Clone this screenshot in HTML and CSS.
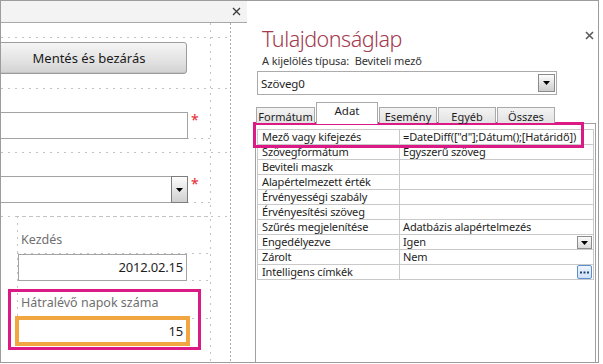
FILE: index.html
```html
<!DOCTYPE html>
<html lang="hu">
<head>
<meta charset="utf-8">
<title>Tulajdonságlap</title>
<link rel="stylesheet" href="styles.css">
</head>
<body>
<div class="frame">
  <section class="form-pane">
    <div class="doc-bar">
      <svg class="doc-close" width="9" height="9" viewBox="0 0 9 9"><path d="M1 1L8 8M8 1L1 8" stroke="#3a3a3a" stroke-width="1.3" fill="none"/></svg>
    </div>
    <div class="canvas">
      <div class="guide g-h g-top"></div>
      <div class="guide g-h g-mid"></div>
      <div class="guide g-h g-after1"></div>
      <div class="guide g-h g-after2"></div>
      <div class="guide g-h g-short g-s1"></div>
      <div class="guide g-h g-short g-s2"></div>
      <div class="guide g-v g-v210"></div>
      <div class="guide g-v g-v230"></div>

      <button class="btn">Mentés és bezárás</button>

      <div class="field-row row-text">
        <div class="textbox wide"></div>
        <span class="req">*</span>
      </div>

      <div class="field-row row-combo">
        <div class="textbox wide combo">
          <span class="dd-btn"><svg width="7" height="4" viewBox="0 0 7 4"><path d="M0 0H7L3.5 4Z" fill="#000"/></svg></span>
        </div>
        <span class="req">*</span>
      </div>

      <div class="stack">
        <div class="cell lbl lbl-first">Kezdés</div>
        <div class="cell fld"><div class="textbox num">2012.02.15</div></div>
        <div class="cell lbl lbl-second">Hátralévő napok száma</div>
        <div class="cell fld fld-sel"><div class="textbox num selected">15</div></div>
      </div>

      <div class="highlight hl-left"></div>
    </div>
  </section>

  <section class="props">
    <div class="props-head">
      <h1 class="title">Tulajdonságlap</h1>
      <svg class="props-close" width="9" height="9" viewBox="0 0 9 9"><path d="M1 1L8 8M8 1L1 8" stroke="#5a5a5a" stroke-width="1.6" fill="none"/></svg>
    </div>
    <div class="sel-type">A kijelölés típusa:&nbsp; Beviteli mező</div>
    <div class="obj-combo">
      <span class="obj-name">Szöveg0</span>
      <span class="dd-btn small"><svg width="7" height="4" viewBox="0 0 7 4"><path d="M0 0H7L3.5 4Z" fill="#000"/></svg></span>
    </div>
    <div class="tabs">
      <div class="tab t1">Formátum</div>
      <div class="tab t2 active">Adat</div>
      <div class="tab t3">Esemény</div>
      <div class="tab t4">Egyéb</div>
      <div class="tab t5">Összes</div>
    </div>
    <div class="tab-panel">
      <div class="prop-table">
        <div class="pk">Mező vagy kifejezés</div><div class="pv">=DateDiff(["d"];Dátum();[Határidő])</div>
        <div class="pk">Szövegformátum</div><div class="pv">Egyszerű szöveg</div>
        <div class="pk">Beviteli maszk</div><div class="pv"></div>
        <div class="pk">Alapértelmezett érték</div><div class="pv"></div>
        <div class="pk">Érvényességi szabály</div><div class="pv"></div>
        <div class="pk">Érvényesítési szöveg</div><div class="pv"></div>
        <div class="pk">Szűrés megjelenítése</div><div class="pv">Adatbázis alapértelmezés</div>
        <div class="pk">Engedélyezve</div><div class="pv">Igen<span class="mini-dd"><svg width="7" height="4" viewBox="0 0 7 4"><path d="M0 0H7L3.5 4Z" fill="#000"/></svg></span></div>
        <div class="pk">Zárolt</div><div class="pv">Nem</div>
        <div class="pk">Intelligens címkék</div><div class="pv"><span class="build-btn"><svg width="9" height="3" viewBox="0 0 9 3"><rect x="0" y="0.5" width="2" height="2" fill="#1d3f77"/><rect x="3.5" y="0.5" width="2" height="2" fill="#1d3f77"/><rect x="7" y="0.5" width="2" height="2" fill="#1d3f77"/></svg></span></div>
      </div>
    </div>
    <div class="highlight hl-right"></div>
  </section>
</div>
</body>
</html>
```
FILE: styles.css
```css
* { box-sizing: border-box; }
html, body { margin: 0; padding: 0; }
body {
  width: 603px;
  height: 364px;
  background: #fff;
  overflow: hidden;
  font-family: "Noto Sans", "Open Sans", sans-serif;
  color: #222;
}

.frame {
  display: flex;
  width: 599px;
  height: 363px;
  border: 1px solid #9c9c9c;
}

/* ---------- left: form design pane ---------- */
.form-pane {
  width: 246px;
  display: flex;
  flex-direction: column;
}
.doc-bar {
  height: 22px;
  background: #f3f3f3;
  border-bottom: 1px solid #a8a8a8;
  display: flex;
  align-items: center;
  justify-content: flex-end;
  padding-right: 6px;
}
.doc-close { display: block; }

.canvas {
  position: relative;
  flex: 1;
  overflow: hidden;
}

.guide { position: absolute; }
.g-h {
  height: 1px;
  left: 0;
  width: 229px;
  background: repeating-linear-gradient(90deg, #c3c3c3 0 2px, transparent 2px 7px);
}
.g-top { top: 14px; }
.g-mid { top: 65px; }
.g-after1 { top: 129px; }
.g-after2 { top: 193px; }
.g-short { left: 186px; width: 23px; }
.g-s1 { top: 115px; }
.g-s2 { top: 179px; }
.g-v {
  width: 1px;
  top: 0;
  bottom: 0;
}
.g-v210 {
  left: 209px;
  background: repeating-linear-gradient(180deg, #c3c3c3 0 2px, transparent 2px 7px);
}
.g-v230 {
  left: 229px;
  background: repeating-linear-gradient(180deg, #a9a9a9 0 2px, transparent 2px 4px);
}

.btn {
  position: relative;
  display: block;
  margin: 19px 0 0 -10px;
  width: 196px;
  height: 32px;
  border: 1px solid #9b9b9b;
  border-radius: 3px;
  background: linear-gradient(#f5f5f5, #e4e4e4 55%, #d2d2d2);
  box-shadow: inset 0 -1px 0 #c4c4c4;
  font-family: "Noto Sans", "Open Sans", sans-serif;
  font-size: 13px;
  color: #1a1a1a;
  padding: 0 0 1px 0;
}

.field-row {
  position: relative;
  display: flex;
  align-items: flex-start;
  margin-left: -11px;
}
.row-text { margin-top: 38px; }
.row-combo { margin-top: 37px; }

.textbox {
  position: relative;
  height: 27px;
  border: 1px solid #a3a3a3;
  background: #fff;
}
.textbox.wide { width: 198px; }
.req {
  color: #e3262b;
  font-size: 14px;
  line-height: 1;
  margin: 1px 0 0 3px;
}
.combo .dd-btn {
  position: absolute;
  right: -1px;
  top: -1px;
  width: 17px;
  height: 27px;
  border: 1px solid #7d7d7d;
  background: linear-gradient(#fdfdfd, #e6e6e6 50%, #cfcfcf);
  display: flex;
  align-items: center;
  justify-content: center;
}
.dd-btn svg { display: block; }

.stack {
  position: relative;
  margin: 13px 0 0 16px;
  width: 193px;
  background:
    repeating-linear-gradient(90deg, #c3c3c3 0 2px, transparent 2px 7px) top left / 100% 1px no-repeat,
    repeating-linear-gradient(180deg, #c3c3c3 0 2px, transparent 2px 7px) top left / 1px 100% no-repeat;
}
.cell {
  background: repeating-linear-gradient(90deg, #c3c3c3 0 2px, transparent 2px 7px) bottom left / 100% 1px no-repeat;
}
.lbl {
  font-size: 12.5px;
  line-height: 16px;
  color: #6f6f6f;
  padding-left: 4px;
}
.lbl-first { height: 38px; padding-top: 16px; }
.lbl-second { height: 38px; padding-top: 14px; }
.fld { height: 27px; padding-left: 1px; }
.fld-sel { height: 30px; padding-top: 0; background: none; }
.textbox.num {
  width: 169px;
  font-size: 13px;
  line-height: 25px;
  text-align: right;
  padding-right: 3px;
  color: #1e1e1e;
  letter-spacing: -0.2px;
}
.textbox.selected {
  height: 24px;
  line-height: 22px;
  border-color: #f0a540;
  outline: 3px solid #f2a641;
}

.highlight {
  position: absolute;
  border: 3px solid #dc1a85;
  pointer-events: none;
}
.hl-left { left: 7px; top: 266px; width: 193px; height: 61px; }

/* ---------- right: property sheet ---------- */
.props {
  position: relative;
  width: 351px;
  display: flex;
  flex-direction: column;
}
.props-head {
  display: flex;
  align-items: flex-start;
  margin-top: 25px;
  padding-left: 15px;
  height: 27px;
}
.title {
  margin: 0;
  font-size: 21.5px;
  line-height: 25px;
  font-weight: 300;
  color: #a33a4e;
  letter-spacing: -0.5px;
}
.props-close {
  display: block;
  margin: 5px 4px 0 auto;
}
.sel-type {
  padding-left: 15px;
  font-size: 11px;
  line-height: 15px;
  color: #333;
  letter-spacing: -0.1px;
}
.obj-combo {
  position: relative;
  margin: 3px 0 0 10px;
  width: 300px;
  height: 24px;
  border: 1px solid #ababab;
  display: flex;
  align-items: center;
  justify-content: space-between;
  padding: 0 1px 0 3px;
}
.obj-name { font-size: 11.5px; color: #1e1e1e; letter-spacing: -0.1px; }
.dd-btn.small {
  width: 17px;
  height: 18px;
  border: 1px solid #8a8a8a;
  background: linear-gradient(#fdfdfd, #e4e4e4 50%, #cdcdcd);
  display: flex;
  align-items: center;
  justify-content: center;
}

.tabs {
  display: flex;
  align-items: flex-end;
  gap: 1px;
  height: 21px;
  margin-top: 7px;
  padding-left: 9px;
  position: relative;
  z-index: 1;
}
.tab {
  height: 16px;
  border: 1px solid #a9a9a9;
  border-bottom: none;
  background: linear-gradient(#f3f3f3, #e2e2e2);
  font-size: 11px;
  line-height: 17px;
  text-align: center;
  color: #1e1e1e;
}
.t1 { width: 59px; }
.t2 { width: 62px; }
.t3 { width: 58px; }
.t4 { width: 58px; }
.t5 { width: 58px; }
.tab.active {
  height: 22px;
  margin-bottom: -1px;
  background: #fff;
  line-height: 16px;
  font-size: 11.5px;
}

.tab-panel {
  flex: 1;
  margin-left: 8px;
  width: 341px;
  border: 1px solid #a0a0a0;
  border-bottom: none;
  padding: 5px 1px 0 1px;
}
.prop-table {
  display: grid;
  grid-template-columns: 142px 1fr;
  border-top: 1px solid #c9c9c9;
  border-left: 1px solid #c9c9c9;
  border-right: 1px solid #c9c9c9;
}
.pk, .pv {
  position: relative;
  height: 15px;
  border-bottom: 1px solid #c9c9c9;
  font-size: 11px;
  line-height: 14px;
  letter-spacing: -0.15px;
  color: #1e1e1e;
  white-space: nowrap;
}
.pk { padding-left: 4px; border-right: 1px solid #c9c9c9; }
.pv { padding-left: 3px; }
.mini-dd {
  position: absolute;
  right: 1px;
  top: 1px;
  width: 15px;
  height: 13px;
  border: 1px solid #8d8d8d;
  background: linear-gradient(#fafafa, #d9d9d9);
  display: flex;
  align-items: flex-end;
  justify-content: center;
  padding-bottom: 3px;
}
.mini-dd svg { display: block; }
.build-btn {
  position: absolute;
  right: 1px;
  top: 0;
  width: 15px;
  height: 14px;
  border: 1px solid #5b8fd0;
  border-radius: 2px;
  background: linear-gradient(#eef5fd, #cfe1f6);
  display: flex;
  align-items: center;
  justify-content: center;
}
.build-btn svg { display: block; }

.hl-right { left: 6px; top: 121px; width: 331px; height: 26px; }
```
